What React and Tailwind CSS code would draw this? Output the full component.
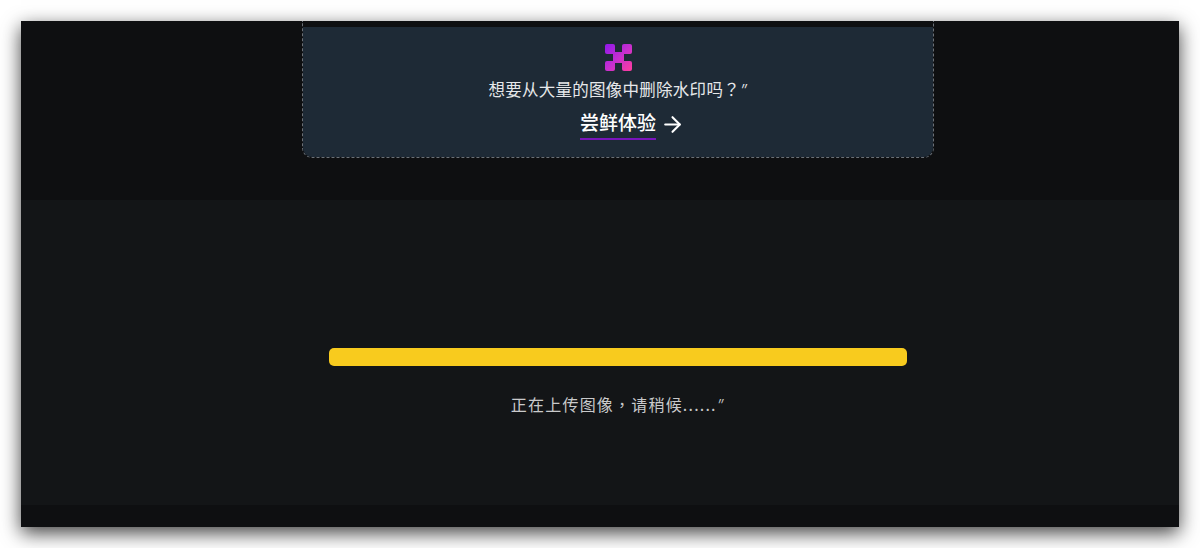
import React from "react";
import { ArrowRight } from "lucide-react";

const cjk = { fontFamily: '"Noto Sans CJK SC", "Liberation Sans", sans-serif' };
const tc = { fontFamily: '"Noto Sans CJK TC", sans-serif' };
const quote = { fontFamily: '"Inter", sans-serif' };

function Logo() {
  return (
    <svg width="27" height="27" viewBox="0 0 27 27" className="block">
      <defs>
        <linearGradient id="logo-grad" gradientUnits="userSpaceOnUse" x1="0" y1="0" x2="27" y2="27">
          <stop offset="0" stopColor="#8f17ea" />
          <stop offset="0.5" stopColor="#c62fd0" />
          <stop offset="1" stopColor="#ff3d9e" />
        </linearGradient>
      </defs>
      <g fill="url(#logo-grad)">
        <rect x="0" y="0" width="10" height="10" rx="2" />
        <rect x="17" y="0" width="10" height="10" rx="2" />
        <rect x="0" y="17" width="10" height="10" rx="2" />
        <rect x="17" y="17" width="10" height="10" rx="2" />
        <rect x="8" y="8" width="11" height="11" rx="1" />
      </g>
    </svg>
  );
}

export default function App() {
  return (
    <div className="h-[548px] w-[1200px] overflow-hidden bg-white p-[21px]" style={cjk}>
      <div className="flex h-[506px] flex-col bg-[#0e0f11] shadow-[0_6px_18px_rgba(0,0,0,0.75)]">
        <div className="flex h-[179px] shrink-0 justify-center pl-[36px]">
          <div className="h-[137px] w-[632px] rounded-b-[10px] border border-t-0 border-dashed border-[#6b7077]">
            <div className="h-[6px]" />
            <div className="flex h-[130px] flex-col items-center rounded-b-[9px] bg-[#1e2a36] pt-[17px]">
              <Logo />
              <p className="mt-[6px] text-[16.5px] leading-[24px] tracking-[0.27px] text-[#e6e8ea]">
                想要从大量的图像中删除水印吗<span style={tc}>？</span>
                <span style={quote} className="italic font-light">”</span>
              </p>
              <div className="mt-[6px] flex items-center gap-[4px] pl-[29px]">
                <span className="border-b-2 border-[#7a14bc] pb-[2px] text-[19px] leading-[28px] font-medium text-white">
                  尝鲜体验
                </span>
                <ArrowRight size={25} strokeWidth={2} className="text-white" />
              </div>
            </div>
          </div>
        </div>
        <div className="flex h-[305px] shrink-0 flex-col items-center bg-[#131517] pl-[36px] pt-[148px]">
          <div className="h-[18px] w-[578px] rounded-[5px] bg-[#f8cb1e]" />
          <p className="mt-[26px] text-[16px] leading-[24px] tracking-[1.2px] text-[#c9cacb]">
            正在上传图像<span style={tc}>，</span>请稍候......
            <span style={quote} className="italic font-light">”</span>
          </p>
        </div>
      </div>
    </div>
  );
}
